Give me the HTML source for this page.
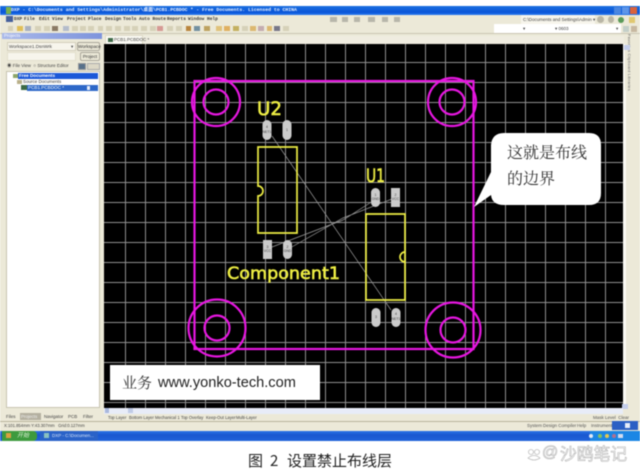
<!DOCTYPE html>
<html><head><meta charset="utf-8"><style>
html,body{margin:0;padding:0;background:#fff}
#p{position:relative;width:640px;height:476px;overflow:hidden;background:#fff;font-family:"Liberation Sans","Noto Sans CJK SC",sans-serif;filter:blur(.45px)}
#p div{position:absolute;white-space:nowrap;box-sizing:border-box}
.s{font-size:4.500px;color:#444;line-height:8px}
.b{background:#ece9d8;border:1px solid #aaa69a;border-radius:2px;font-size:4.600px;color:#333;text-align:center;line-height:7px}
.m{font:bold 4.500px/9px 'Liberation Mono',monospace;color:#333;top:15px}
.t{font:4.200px/7px 'Liberation Sans';color:#444;top:414px}
.u{font:4.500px/8px 'Liberation Sans';color:#555;top:422px}
.f{font:4.500px/7px 'Liberation Sans';color:#444;top:413px}
</style></head><body><div id="p">
<div style="left:0;top:14px;width:640px;height:427px;background:#ece9d8"></div>
<div style="left:0;top:6px;width:640px;height:9px;background:linear-gradient(#1a6fe0,#0a55d8 70%,#2a7af0)"></div>
<div style="left:11px;top:6px;font:bold 4.800px/9px 'Liberation Mono','Noto Sans CJK SC',monospace;color:#e8f0ff">DXP - C:\Documents and Settings\Administrator\桌面\PCB1.PCBDOC * - Free Documents. Licensed to CHINA</div>
<div style="left:6px;top:7px;width:5px;height:7px;background:#7ab04c"></div>
<div style="left:614px;top:7px;width:7px;height:7px;background:#4a86e0"></div>
<div style="left:622px;top:7px;width:7px;height:7px;background:#5d95e8"></div>
<div style="left:630px;top:7px;width:7px;height:7px;background:#d9623c"></div>
<div style="left:6px;top:16px;width:7px;height:6px;background:#45609c"></div>
<div class="m" style="left:14px">DXP</div><div class="m" style="left:24px">File</div><div class="m" style="left:39px">Edit</div><div class="m" style="left:52px">View</div><div class="m" style="left:67px">Project</div><div class="m" style="left:88px">Place</div><div class="m" style="left:105px">Design</div><div class="m" style="left:123px">Tools</div><div class="m" style="left:139px">Auto Route</div><div class="m" style="left:167px">Reports</div><div class="m" style="left:188px">Window</div><div class="m" style="left:207px">Help</div>
<div style="left:521px;top:15px;width:74px;height:9px;background:#f7f5ec;font:4.500px/9px 'Liberation Sans';color:#444;padding-left:2px">C:\Documents and Settings\Admin ▾</div>
<div style="left:597px;top:16px;width:7px;height:7px;border-radius:50%;background:#b9b6a6"></div>
<div style="left:608px;top:16px;width:6px;height:7px;border-radius:50%;background:#b9b6a6"></div>
<div style="left:618px;top:17px;width:6px;height:6px;border-radius:50%;background:#5a9a58"></div>
<div style="left:629px;top:17px;width:6px;height:6px;background:#e0c870"></div>
<div style="left:494px;top:24px;width:127px;height:9px;background:#fff"></div>
<div style="left:523px;top:24px;font:4.500px/9px 'Liberation Sans';color:#444">▾</div>
<div style="left:555px;top:24px;font:4.500px/9px 'Liberation Sans';color:#444">▾ 0603</div>
<div style="left:616px;top:24px;font:4.500px/9px 'Liberation Sans';color:#444">▾</div>
<div style="left:623px;top:26px;width:6px;height:6px;background:#c3cfc8"></div>
<div style="left:631px;top:26px;width:6px;height:6px;background:#c7b8a0"></div>
<svg style="position:absolute;left:0;top:24px" width="420" height="9">
<g fill="#d6d1b8"><rect x="8" y="2" width="5" height="5"/><rect x="17" y="2" width="6" height="5" fill="#e0bf58"/><rect x="25" y="2" width="6" height="5" fill="#a8b0c0"/><rect x="35" y="2" width="6" height="5"/><rect x="44" y="2" width="6" height="5"/><rect x="52" y="2" width="6" height="5" fill="#8a7a65"/><rect x="63" y="2" width="6" height="5" fill="#b4bccb"/><rect x="72" y="2" width="6" height="5"/><rect x="80" y="2" width="6" height="5"/><rect x="88" y="2" width="6" height="5"/><rect x="98" y="2" width="5" height="5"/><rect x="106" y="2" width="6" height="5"/><rect x="115" y="2" width="6" height="5"/><rect x="124" y="2" width="6" height="5"/><rect x="132" y="2" width="6" height="5"/><rect x="141" y="2" width="6" height="5"/><rect x="150" y="2" width="6" height="5"/><rect x="157" y="2" width="6" height="5" fill="#d69a94"/><rect x="167" y="2" width="6" height="5"/><rect x="176" y="2" width="6" height="5"/><rect x="186" y="2" width="5" height="5" fill="#b9853e"/><rect x="194" y="2" width="6" height="5" fill="#7390a0"/><rect x="204" y="2" width="6" height="5" fill="#bda260"/><rect x="216" y="2" width="6" height="5" fill="#e0c27a"/><rect x="224" y="2" width="6" height="5" fill="#e0b060"/><rect x="233" y="2" width="6" height="5" fill="#c4b060"/><rect x="242" y="2" width="6" height="5"/><rect x="250" y="2" width="6" height="5" fill="#dcb870"/><rect x="258" y="2" width="6" height="5" fill="#c4acb0"/><rect x="267" y="2" width="5" height="5" fill="#dcb870"/><rect x="274" y="2" width="6" height="5" fill="#778"/><rect x="283" y="2" width="6" height="5"/></g></svg>
<svg style="position:absolute;left:328px;top:15px" width="80" height="9"><g fill="#b7b6aa"><rect x="2" y="2" width="7" height="5"/><rect x="14" y="2" width="6" height="5"/><rect x="26" y="2" width="6" height="5"/><rect x="40" y="2" width="7" height="5"/><rect x="54" y="2" width="6" height="5"/><rect x="66" y="2" width="6" height="5"/></g></svg>
<div style="left:0;top:33px;width:640px;height:1px;background:#c9c5b2"></div>

<div style="left:2px;top:33px;width:100px;height:6px;background:linear-gradient(90deg,#a8b8ea,#7e94dc);font:4.500px/6px 'Liberation Sans';color:#fff;padding-left:2px">Projects</div>
<div style="left:7px;top:42px;width:69px;height:9px;background:#f7f5ec;border:1px solid #d3cfbc;font-size:4.600px;line-height:7px;color:#444;padding-left:1px">Workspace1.DsnWrk<span style="position:absolute;left:63px">▾</span></div>
<div class="b" style="left:77px;top:42px;width:23px;height:9px">Workspace</div>
<div style="left:7px;top:52px;width:69px;height:9px;background:#f7f5ec;border:1px solid #e3dfcc"></div>
<div class="b" style="left:80px;top:52px;width:20px;height:9px">Project</div>
<div class="s" style="left:7px;top:62px;color:#444">◉ File View &nbsp;○ Structure Editor</div>
<div style="left:78px;top:63px;width:8px;height:7px;background:#57708a;border:1px solid #999"></div>
<div style="left:87px;top:63px;width:13px;height:7px;background:#dcd8c6;border:1px solid #aaa"></div>
<div style="left:6px;top:71px;width:94px;height:337px;background:#fff;border:1px solid #c8c4b0"></div>
<div style="left:18px;top:73px;width:80px;height:6px;background:#1b58d8;font:bold 4.600px/6px 'Liberation Sans';color:#fff;padding-left:1px">Free Documents</div>
<div style="left:13px;top:74px;width:5px;height:4px;background:#8ea76a"></div>
<div style="left:17px;top:80px;width:5px;height:4px;background:#b9b08a"></div>
<div class="s" style="left:23px;top:78px;line-height:8px;color:#333">Source Documents</div>
<div style="left:21px;top:85px;width:6px;height:5px;background:#3d6a44"></div>
<div style="left:27px;top:85px;width:71px;height:5.500px;background:#2e68c8;font:4.600px/6px 'Liberation Sans';color:#fff;padding-left:1px">PCB1.PCBDOC *<span style="position:absolute;left:60px;top:1px;width:3px;height:4px;background:#e8eefa"></span></div>

<div style="left:104px;top:36px;width:520px;height:8px;background:#efece0"></div>
<div style="left:105px;top:35px;width:38px;height:9px;background:#fbfaf4;border:1px solid #ddd9c6;border-bottom:0;font:4.500px/8px 'Liberation Sans';color:#444;padding-left:8px">PCB1.PCBDOC *<span style="position:absolute;left:2px;top:2px;width:5px;height:4px;background:#3e6a48"></span></div>

<svg style="position:absolute;left:104px;top:44px" width="519" height="364" viewBox="104 44 519 364">
<rect x="104" y="44" width="519" height="364" fill="#000"/>
<g stroke="#8f8f8f" stroke-width="1">
<path d="M125.500 44V408M145.500 44V408M165.500 44V408M185.500 44V408M205.500 44V408M225.500 44V408M245.500 44V408M265.500 44V408M285.500 44V408M305.500 44V408M325.500 44V408M345.500 44V408M365.500 44V408M385.500 44V408M405.500 44V408M425.500 44V408M445.500 44V408M465.500 44V408M485.500 44V408M505.500 44V408M525.500 44V408M545.500 44V408M565.500 44V408M585.500 44V408M605.500 44V408"/>
<path d="M104 62.500H623M104 82.500H623M104 102.500H623M104 122.500H623M104 142.500H623M104 162.500H623M104 182.500H623M104 202.500H623M104 222.500H623M104 242.500H623M104 262.500H623M104 282.500H623M104 302.500H623M104 322.500H623M104 342.500H623M104 362.500H623M104 382.500H623M104 402.500H623"/>
</g>
<g fill="none" stroke="#9a9a9a" stroke-width=".7"><path d="M272 136L391 310M272 247L343 220L373 201M290 248L343 218L392 199"/></g>
<g fill="none" stroke="#e617e0" stroke-width="2.200">
<rect x="194.500" y="81" width="279" height="268"/>
<circle cx="216" cy="102" r="24"/><circle cx="216" cy="102" r="12.500"/>
<circle cx="452" cy="102" r="24"/><circle cx="452" cy="102" r="12.500"/>
<circle cx="217" cy="328" r="28.500"/><circle cx="217" cy="328" r="12.500"/>
<circle cx="453" cy="330" r="27.500"/><circle cx="453" cy="330" r="12.500"/>
</g>
<g fill="none" stroke="#eeee44" stroke-width="1.700">
<path d="M258 147H297V233H258V196A5 5 0 0 0 258 186Z"/>
<path d="M366 214H405V262A5 5 0 0 1 405 252V300H366Z"/>
</g>
<g fill="#cbcbcb">
<rect x="262.500" y="120" width="9" height="20" rx="4.500"/><rect x="282.500" y="120" width="9" height="20" rx="4.500"/>
<rect x="263" y="240" width="9" height="19"/><rect x="283" y="240" width="9" height="19" rx="4.500"/>
<rect x="371" y="188" width="9" height="19" rx="4.500"/><rect x="391" y="188" width="9" height="19"/>
<rect x="371.500" y="308" width="9" height="19" rx="4.500"/><rect x="391.500" y="308" width="9" height="19" rx="4.500"/>
</g>
<g font-family="Liberation Sans" font-size="3.500" fill="#444" text-anchor="middle">
<text x="267" y="128">4</text><text x="267" y="133">NET1</text><text x="287" y="131">1</text>
<text x="267.500" y="248">3</text><text x="267.500" y="252">VCC</text><text x="287.500" y="248">2</text><text x="287.500" y="252">GND</text>
<text x="375.500" y="196">1</text><text x="375.500" y="200">GND</text><text x="395.500" y="196">2</text><text x="395.500" y="200">VCC</text>
<text x="376" y="318">3</text><text x="396" y="315">4</text><text x="396" y="320">NET1</text>
</g>
<g font-family="DejaVu Sans" fill="#eeee44" stroke="#eeee44" stroke-width=".6">
<text x="257" y="115" font-size="19" textLength="25" lengthAdjust="spacingAndGlyphs">U2</text>
<text x="366" y="182" font-size="19" textLength="19" lengthAdjust="spacingAndGlyphs">U1</text>
<text x="227" y="279" font-size="17" textLength="113" lengthAdjust="spacingAndGlyphs">Component1</text>
</g>
<path d="M504 133H589Q601 133 601 145V193Q601 205 589 205H504Q492 205 491 195L474 207L491 172V145Q492 133 504 133Z" fill="#fff"/>
<rect x="110" y="365" width="210" height="35" fill="#fff"/>
</svg>
<div style="left:507px;top:141px;font:16px/22px 'Noto Serif CJK SC',serif;color:#333">这就是布线</div>
<div style="left:507px;top:167px;font:16px/22px 'Noto Serif CJK SC',serif;color:#333">的边界</div>
<div style="left:122px;top:373px;font:15px/20px 'Noto Serif CJK SC',serif;color:#333">业务</div>
<div style="left:158px;top:373px;font:14.600px/20px 'Liberation Sans';color:#222">www.yonko-tech.com</div>

<div style="left:623px;top:44px;width:3px;height:364px;background:#fbfaf4"></div>
<div style="left:625px;top:34px;width:9px;height:56px;background:#ece9d8;font:4px/9px 'Liberation Sans';color:#666;writing-mode:vertical-rl;letter-spacing:.2px">Favorites Clipboard Libraries</div>
<div style="left:624px;top:45px;width:6px;height:5px;background:#c3cdea"></div>
<div style="left:622px;top:404px;width:6px;height:5px;background:#c3cdea"></div>

<div style="left:2px;top:408px;width:100px;height:13px;background:#ece9d8"></div>
<div class="f" style="left:6px">Files</div>
<div class="f" style="left:20px;width:21px;background:#b4b0a0;color:#eee;padding-left:1px">Projects</div>
<div class="f" style="left:44px">Navigator</div><div class="f" style="left:68px">PCB</div><div class="f" style="left:83px">Filter</div>
<div style="left:104px;top:408px;width:519px;height:6px;background:#e8ecf8"></div>
<div style="left:105px;top:408px;width:4px;height:5px;background:#a9b8dc"></div>
<div style="left:128px;top:408px;width:5px;height:5px;background:#c0cbe6"></div>
<div class="t" style="left:108px">Top Layer</div><div class="t" style="left:129px">Bottom Layer</div><div class="t" style="left:155px">Mechanical 1</div><div class="t" style="left:181px">Top Overlay</div><div class="t" style="left:206px">Keep-Out Layer</div><div class="t" style="left:236px">Multi-Layer</div>
<div class="t" style="left:593px;font-size:4.500px;color:#555">Mask Level &nbsp;Clear</div>
<div style="left:0;top:421px;width:640px;height:1px;background:#b9b49c"></div>
<div class="u" style="left:4px;color:#444;font-size:4.200px">X:101.854mm Y:43.307mm &nbsp; Grid:0.127mm</div>
<div class="u" style="left:527px">System</div><div class="u" style="left:543px">Design Compiler</div><div class="u" style="left:577px">Help</div><div class="u" style="left:591px">Instruments</div>
<div style="left:612px;top:421px;width:26px;height:9px;background:#2b5fc4"></div>
<div style="left:625px;top:423px;width:5px;height:5px;background:#e8eefa"></div>
<div style="left:0;top:430.500px;width:640px;height:10.500px;background:linear-gradient(#2b74e8,#1a57d0 40%,#2164da)"></div>
<div style="left:2px;top:431px;width:35px;height:10px;background:#3d9a3e;border-radius:0 4px 4px 0;font:italic 6px/10px 'Liberation Sans','Noto Sans CJK SC';color:#dff0d8;padding-left:15px">开始</div>
<div style="left:6px;top:433px;width:5px;height:5px;background:#d9a040"></div>
<div style="left:40px;top:431px;width:58px;height:10px;background:#2a62c8;font:4.500px/10px 'Liberation Sans';color:#d8e4f8;padding-left:12px">DXP - C:\Documen...</div>
<div style="left:44px;top:433px;width:5px;height:5px;background:#8ac0c0"></div>
<div style="left:590px;top:431px;width:50px;height:10px;background:#1b86e4"></div>
<svg style="position:absolute;left:588px;top:432px" width="40" height="8"><circle cx="3" cy="4" r="2" fill="#dfe8f5"/><circle cx="12" cy="4" r="2" fill="#87c060"/><circle cx="19" cy="4" r="2" fill="#e4c850"/><circle cx="26" cy="4" r="2" fill="#b07090"/><rect x="30" y="2" width="5" height="4" fill="#d0dcf0"/></svg>

<div style="left:248px;top:451px;font:15px/20px 'Noto Sans CJK SC',sans-serif;color:#222">图</div>
<div style="left:270px;top:451px;font:15px/20px 'Noto Sans CJK SC',sans-serif;color:#222">2</div>
<div style="left:287px;top:451px;font:15px/20px 'Noto Sans CJK SC',sans-serif;color:#222">设置禁止布线层</div>
<svg style="position:absolute;left:527px;top:446px" width="14" height="16"><g fill="#fff" stroke="#bdbdbd" stroke-width=".8"><circle cx="4" cy="6" r="2.500"/><circle cx="10" cy="6" r="2.500"/><path d="M1 12Q7 7 13 12Q7 16 1 12Z"/></g></svg>
<div style="left:542px;top:443px;font:16px/20px 'Liberation Sans',sans-serif;color:#fff;-webkit-text-stroke:.6px #b5b5b5">@</div>
<div style="left:560px;top:443px;font:16.800px/20px 'Noto Sans CJK SC',sans-serif;color:#fff;-webkit-text-stroke:.6px #b5b5b5">沙鸥笔记</div>
</div></body></html>
